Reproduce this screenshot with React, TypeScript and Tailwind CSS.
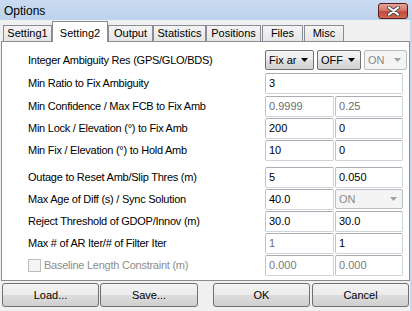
import React from "react";

const font = { fontFamily: '"Liberation Sans", Arial, sans-serif' };

function Arrow({ disabled }: { disabled?: boolean }) {
  return (
    <svg width="7" height="4" viewBox="0 0 7 4" className="shrink-0">
      <polygon points="0,0 7,0 3.5,4" fill={disabled ? "#a0a0a0" : "#000"} />
    </svg>
  );
}

function Select({ w, text, disabled }: { w: string; text: string; disabled?: boolean }) {
  return (
    <div
      className={
        w +
        " h-[20px] rounded-[2px] border flex items-center justify-between pl-[3px] pr-[5px] " +
        (disabled
          ? "border-[#b9bdc1] bg-[#f4f4f4] text-[#8a8a8a]"
          : "border-[#707070] bg-[linear-gradient(#f3f3f3,#ececec_50%,#dfdfdf_50%,#d2d2d2)] text-black")
      }
    >
      <span className="leading-none">{text}</span>
      <Arrow disabled={disabled} />
    </div>
  );
}

function Input({ w, text, gray, light }: { w: string; text: string; gray?: boolean; light?: boolean }) {
  return (
    <div
      className={
        w +
        " h-[21px] rounded-[2px] border border-[#d0d3d9] border-t-[#abadb3] border-l-[#c0c3c9] bg-white flex items-center pl-[3px] " +
        (light ? "text-[#7a7a7a]" : gray ? "text-[#6d6d6d]" : "text-black")
      }
    >
      <span className="leading-none">{text}</span>
    </div>
  );
}

function Row({
  h,
  label,
  children,
  labelClass,
}: {
  h: string;
  label: React.ReactNode;
  children: React.ReactNode;
  labelClass?: string;
}) {
  return (
    <div className={h + " flex items-start"}>
      <div className={"w-[237px] h-[21px] flex items-center tracking-[-0.25px] " + (labelClass ?? "text-black")}>
        {label}
      </div>
      <div className="flex gap-[1px]">{children}</div>
    </div>
  );
}

function Tab({ w, text, selected, ml }: { w: string; text: string; selected?: boolean; ml?: string }) {
  if (selected) {
    return (
      <div
        className={
          w +
          " " +
          (ml ?? "") +
          " relative z-10 h-[21px] -mb-[1px] bg-white border border-b-0 border-[#898c95] flex items-start justify-center pt-[3px] text-black"
        }
      >
        {text}
      </div>
    );
  }
  return (
    <div
      className={
        w +
        " " +
        (ml ?? "") +
        " h-[16px] border border-b-0 border-[#898c95] bg-[linear-gradient(#f4f4f4,#e6e6e6)] flex items-center justify-center text-black"
      }
    >
      {text}
    </div>
  );
}

function Button({ w, ml, text }: { w: string; ml?: string; text: string }) {
  return (
    <div
      className={
        w +
        " " +
        (ml ?? "") +
        " h-[24px] rounded-[3px] border border-[#707070] bg-[linear-gradient(#f2f2f2,#ebebeb_50%,#dddddd_50%,#cfcfcf)] flex items-center justify-center text-black"
      }
    >
      {text}
    </div>
  );
}

export default function App() {
  return (
    <div className="w-[412px] h-[311px] bg-[#c6d8ee] overflow-hidden flex flex-col text-[11px]" style={font}>
      {/* Title bar */}
      <div className="h-[20px] flex items-center justify-between bg-[linear-gradient(#c9dbf0,#bdd2eb)]">
        <span className="pl-[4px] text-[12px] text-black leading-none pt-[1px]">Options</span>
        <div className="mr-[4px] mt-[1px] w-[30px] h-[16px] rounded-[3px] border border-[#5a1b1b] bg-[linear-gradient(#e4a49a,#d27a6c_45%,#c24a3a_55%,#cf6a55)] flex items-center justify-center">
          <svg width="13" height="10" viewBox="0 0 13 10">
            <path d="M2 1.5 L11 8.5 M11 1.5 L2 8.5" stroke="#4a4a4a" strokeWidth="4" strokeLinecap="round" />
            <path d="M2 1.5 L11 8.5 M11 1.5 L2 8.5" stroke="#ffffff" strokeWidth="2.2" strokeLinecap="round" />
          </svg>
        </div>
      </div>
      {/* Body */}
      <div className="w-[410px] flex-1 bg-[#f0f0f0] flex flex-col">
        {/* Tabs */}
        <div className="h-[21px] flex items-end">
          <Tab w="w-[49px]" ml="ml-[3px]" text="Setting1" />
          <Tab w="w-[56px]" text="Setting2" selected />
          <Tab w="w-[45px]" text="Output" />
          <Tab w="w-[53px]" text="Statistics" />
          <Tab w="w-[55px]" text="Positions" />
          <Tab w="w-[41px]" ml="ml-[1px]" text="Files" />
          <Tab w="w-[40px]" ml="ml-[1px]" text="Misc" />
        </div>
        {/* Panel */}
        <div className="ml-[1px] w-[409px] h-[240px] border border-[#898c95] bg-white pt-[8px] pl-[26px] flex flex-col">
          <Row h="h-[23px]" label="Integer Ambiguity Res (GPS/GLO/BDS)">
            <Select w="w-[49px]" text="Fix ar" />
            <div className="w-[1px]" />
            <Select w="w-[44px]" text="OFF" />
            <div className="w-[1px]" />
            <Select w="w-[43px]" text="ON" disabled />
          </Row>
          <Row h="h-[23px]" label="Min Ratio to Fix Ambiguity">
            <Input w="w-[138px]" text="3" />
          </Row>
          <Row h="h-[22px]" label="Min Confidence / Max FCB to Fix Amb">
            <Input w="w-[69px]" text="0.9999" gray />
            <Input w="w-[68px]" text="0.25" gray />
          </Row>
          <Row h="h-[22px]" label="Min Lock / Elevation (°) to Fix Amb">
            <Input w="w-[69px]" text="200" />
            <Input w="w-[68px]" text="0" />
          </Row>
          <Row h="h-[27px]" label="Min Fix / Elevation (°) to Hold Amb">
            <Input w="w-[69px]" text="10" />
            <Input w="w-[68px]" text="0" />
          </Row>
          <Row h="h-[22px]" label="Outage to Reset Amb/Slip Thres (m)">
            <Input w="w-[69px]" text="5" />
            <Input w="w-[68px]" text="0.050" />
          </Row>
          <Row h="h-[22px]" label="Max Age of Diff (s) / Sync Solution">
            <Input w="w-[69px]" text="40.0" />
            <Select w="w-[68px]" text="ON" disabled />
          </Row>
          <Row h="h-[22px]" label="Reject Threshold of GDOP/Innov (m)">
            <Input w="w-[69px]" text="30.0" />
            <Input w="w-[68px]" text="30.0" />
          </Row>
          <Row h="h-[22px]" label="Max # of AR Iter/# of Filter Iter">
            <Input w="w-[69px]" text="1" gray />
            <Input w="w-[68px]" text="1" />
          </Row>
          <Row
            h="h-[22px]"
            labelClass="text-[#8d8d8d]"
            label={
              <div className="flex items-center gap-[3px]">
                <div className="w-[13px] h-[13px] border border-[#bcbcbc] bg-[#f4f4f4]" />
                <span>Baseline Length Constraint (m)</span>
              </div>
            }
          >
            <Input w="w-[69px]" text="0.000" light />
            <Input w="w-[68px]" text="0.000" light />
          </Row>
        </div>
        {/* Buttons */}
        <div className="mt-[2px] pl-[2px] flex">
          <Button w="w-[97px]" text="Load..." />
          <Button w="w-[98px]" ml="ml-[1px]" text="Save..." />
          <Button w="w-[97px]" ml="ml-[15px]" text="OK" />
          <Button w="w-[97px]" ml="ml-[2px]" text="Cancel" />
        </div>
      </div>
    </div>
  );
}
